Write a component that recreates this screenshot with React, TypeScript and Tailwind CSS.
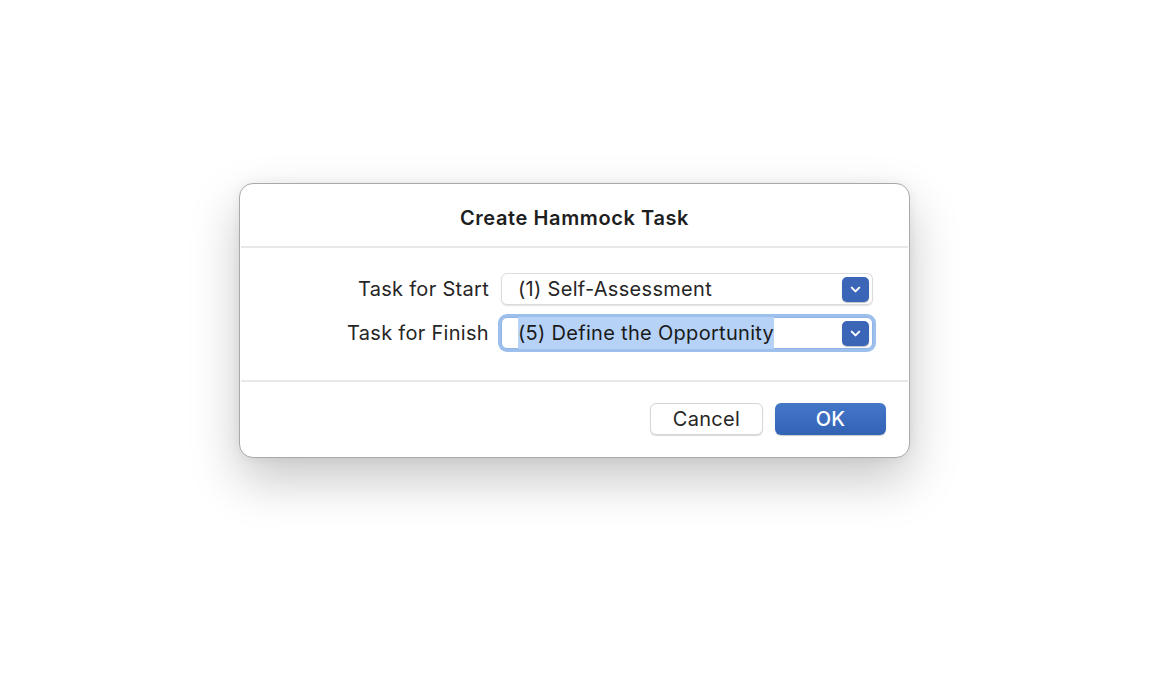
import { ChevronDown } from 'lucide-react';

const font = { fontFamily: 'Inter, "Liberation Sans", Arial, sans-serif' };

function Chevron() {
  return (
    <div className="flex h-[25px] w-[27px] items-center justify-center rounded-[5px] bg-[#3b66b8] shadow-[0_1px_1px_rgba(0,0,0,0.25)]">
      <ChevronDown className="h-[15px] w-[15px] text-white" strokeWidth={3.2} />
    </div>
  );
}

export default function App() {
  return (
    <div className="min-h-[698px] w-full bg-white pt-[183px]" style={font}>
      <div className="ml-[239px] flex h-[275px] w-[671px] flex-col rounded-[14px] border border-[#a9a9a9] bg-white shadow-[0_22px_50px_rgba(0,0,0,0.22),0_0_12px_rgba(0,0,0,0.06)]">
        {/* Header */}
        <div className="flex h-[62px] items-center justify-center pt-[6px]">
          <h1 className="text-[20px] font-semibold tracking-[0.6px] text-[#1e1e1e]">Create Hammock Task</h1>
        </div>
        <div className="mx-[1px] h-[2px] bg-[#e8e8e8]"></div>

        {/* Body */}
        <div className="flex h-[132px] flex-col justify-center gap-[12px] pb-[6px] tracking-[0.3px]">
          <div className="grid grid-cols-[249px_372px] items-center gap-x-[12px]">
            <span className="text-right text-[20px] text-[#262626]">Task for Start</span>
            <div className="flex h-[32px] items-center justify-between rounded-[6px] border border-[#dcdcdc] bg-white pl-[16px] pr-[3px] shadow-[0_1px_1px_rgba(0,0,0,0.12)]">
              <span className="text-[20px] text-[#262626]">(1) Self-Assessment</span>
              <Chevron />
            </div>
          </div>
          <div className="grid grid-cols-[249px_372px] items-center gap-x-[12px]">
            <span className="text-right text-[20px] text-[#262626]">Task for Finish</span>
            <div className="flex h-[32px] items-center justify-between rounded-[6px] border border-[#8fb3e6] bg-white pl-[16px] pr-[3px] shadow-[0_0_0_3px_#9dbfec]">
              <span className="bg-[#b6d2f6] py-[1px] text-[20px] text-[#1a1a1a]">(5) Define the Opportunity</span>
              <Chevron />
            </div>
          </div>
        </div>
        <div className="mx-[1px] h-[2px] bg-[#e8e8e8]"></div>

        {/* Footer */}
        <div className="flex flex-1 items-center justify-end gap-[12px] pr-[23px] pb-[2px] tracking-[0.3px]">
          <button className="h-[32px] w-[113px] rounded-[6px] border border-[#d6d6d6] bg-white text-[20px] text-[#262626] shadow-[0_1px_1px_rgba(0,0,0,0.15)]">
            Cancel
          </button>
          <button className="h-[32px] w-[111px] rounded-[6px] bg-gradient-to-b from-[#4577c9] to-[#3262b4] text-[20px] font-medium text-white shadow-[0_1px_1px_rgba(0,0,0,0.2)]">
            OK
          </button>
        </div>
      </div>
    </div>
  );
}
